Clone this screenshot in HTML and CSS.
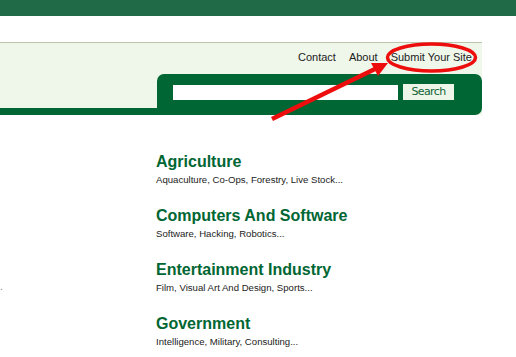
FILE: index.html
```html
<!DOCTYPE html>
<html lang="en">
<head>
  <meta charset="UTF-8">
  <meta name="viewport" content="width=device-width, initial-scale=1.0">
  <title>Directory</title>
  <link rel="stylesheet" href="styles.css">
</head>
<body>

  <div class="topbar"></div>

  <header class="band">
    <nav class="nav">
      <a href="#">Contact</a>
      <a href="#">About</a>
      <a href="#">Submit Your Site</a>
    </nav>
    <div class="search-row">
      <form class="search-box">
        <input type="text" class="search-input">
        <button type="button" class="search-btn">Search</button>
      </form>
    </div>
    <div class="band-foot"></div>
  </header>

  <main class="content">
    <div class="side">.</div>
    <ul class="cats">
      <li>
        <h2>Agriculture</h2>
        <p>Aquaculture, Co-Ops, Forestry, Live Stock...</p>
      </li>
      <li>
        <h2>Computers And Software</h2>
        <p>Software, Hacking, Robotics...</p>
      </li>
      <li>
        <h2>Entertainment Industry</h2>
        <p>Film, Visual Art And Design, Sports...</p>
      </li>
      <li>
        <h2>Government</h2>
        <p>Intelligence, Military, Consulting...</p>
      </li>
    </ul>
  </main>

  <!-- red annotation drawn over the page -->
  <svg class="markup" width="516" height="357" viewBox="0 0 516 357">
    <ellipse cx="431.5" cy="57.5" rx="44" ry="13.5" fill="none" stroke="#ee0d0d" stroke-width="3.5"/>
    <line x1="272" y1="119" x2="376" y2="68.5" stroke="#ee0d0d" stroke-width="4.5"/>
    <polygon points="388,63 371,63 378,76" fill="#ee0d0d"/>
  </svg>

</body>
</html>
```

FILE: styles.css
```css
body {
  font-family: "Liberation Sans", Arial, sans-serif;
  background: #fff;
  margin: 0;
  padding: 0;
  color: #222;
}
.topbar {
  height: 16px;
  background: #216a48;
  margin-bottom: 26px;
}
.band {
  width: 482px;
  background: #eff6ea;
  border-top: 1px solid #bcc4ae;
}
.nav {
  display: flex;
  justify-content: flex-end;
  gap: 13px;
  padding: 7px 10px 0 0;
  font-size: 11px;
  line-height: 14px;
}
.nav a {
  color: #222;
  text-decoration: none;
}
.search-row {
  display: flex;
  justify-content: flex-end;
  margin-top: 10px;
}
.search-box {
  width: 325px;
  height: 34px;
  box-sizing: border-box;
  margin: 0;
  padding: 10px 0 0 16px;
  background: #006633;
  border-radius: 7px 7px 0 0;
  display: flex;
  align-items: flex-start;
  gap: 5px;
}
.search-input {
  width: 225px;
  height: 15px;
  margin: 1px 0 0;
  padding: 0;
  border: none;
  background: #fff;
  box-sizing: border-box;
}
.search-btn {
  width: 51px;
  height: 16px;
  padding: 0;
  border: none;
  background: #eef5e9;
  color: #0d6434;
  font-family: "DejaVu Sans", sans-serif;
  font-size: 11px;
  letter-spacing: -0.6px;
  line-height: 16px;
}
.band-foot {
  height: 7px;
  background: #006633;
  border-bottom-right-radius: 7px;
}
.content {
  display: flex;
  padding-top: 37px;
}
.side {
  width: 156px;
  padding-top: 129px;
  font-size: 10px;
  line-height: 12px;
  color: #6a7d8c;
}
.cats {
  list-style-type: none;
  margin: 0;
  padding: 0;
}
.cats li {
  height: 54px;
}
.cats h2 {
  margin: 0 0 2px;
  font-size: 16px;
  line-height: 20px;
  color: #006633;
}
.cats p {
  margin: 0;
  font-size: 9.6px;
  line-height: 12px;
  color: #222;
}
.markup {
  position: absolute;
  left: 0;
  top: 0;
  pointer-events: none;
}
```
